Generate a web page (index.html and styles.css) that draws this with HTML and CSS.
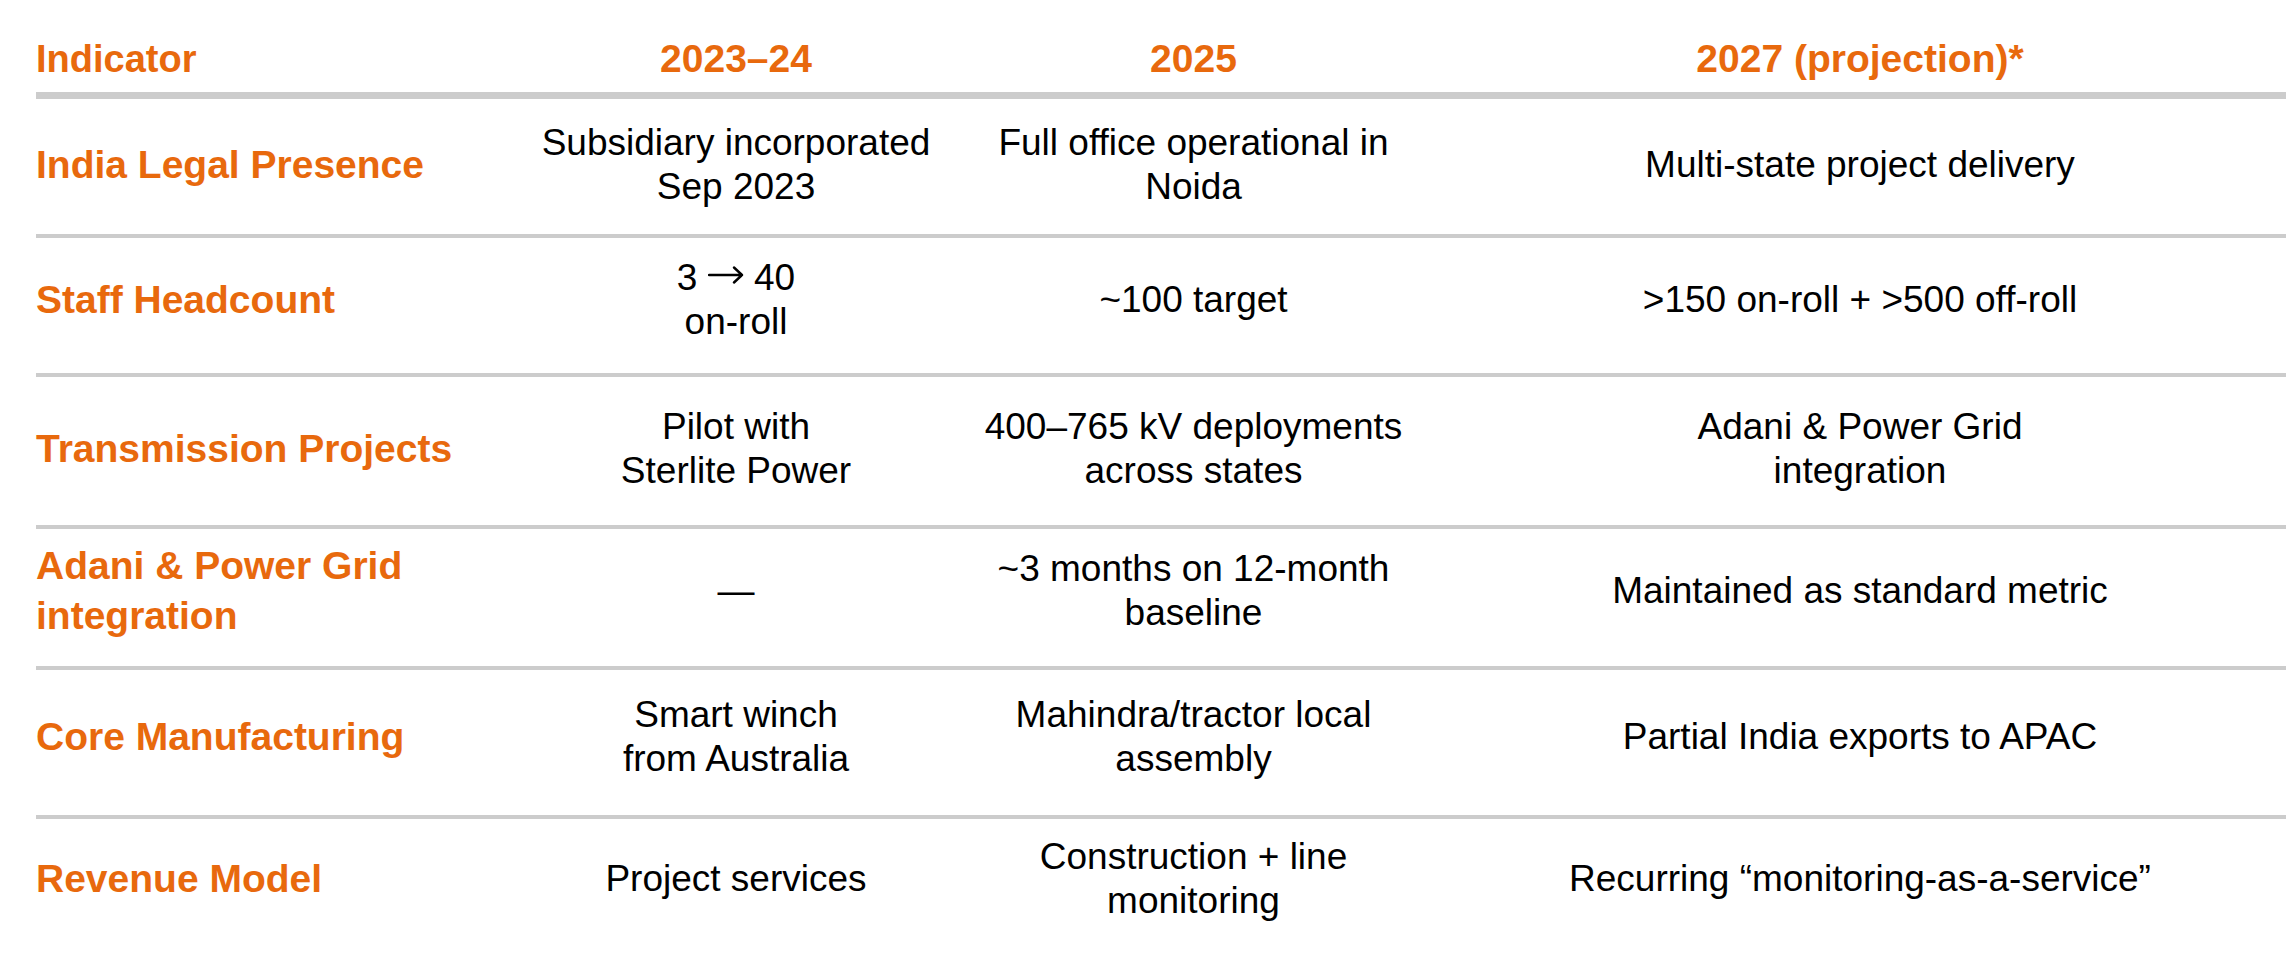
FILE: index.html
```html
<!DOCTYPE html>
<html lang="en">
<head>
<meta charset="utf-8">
<title>India roadmap indicators</title>
<link rel="stylesheet" href="styles.css">
</head>
<body>
<div class="table">
  <div class="row row-head">
    <div class="cell cell-label">Indicator</div>
    <div class="cell">2023–24</div>
    <div class="cell">2025</div>
    <div class="cell">2027 (projection)*</div>
  </div>
  <div class="row row-1">
    <div class="cell cell-label">India Legal Presence</div>
    <div class="cell">Subsidiary incorporated<br>Sep 2023</div>
    <div class="cell">Full office operational in<br>Noida</div>
    <div class="cell">Multi-state project delivery</div>
  </div>
  <div class="row row-2">
    <div class="cell cell-label">Staff Headcount</div>
    <div class="cell">3 <svg class="arrow" width="36" height="22" viewBox="0 0 36 22" aria-label="→"><path d="M1 11 H34 M26 3.5 L34 11 L26 18.5" fill="none" stroke="#000" stroke-width="2.4" stroke-linecap="round" stroke-linejoin="round"/></svg> 40<br>on-roll</div>
    <div class="cell">~100 target</div>
    <div class="cell">&gt;150 on-roll + &gt;500 off-roll</div>
  </div>
  <div class="row row-3">
    <div class="cell cell-label">Transmission Projects</div>
    <div class="cell">Pilot with<br>Sterlite Power</div>
    <div class="cell">400–765 kV deployments<br>across states</div>
    <div class="cell">Adani &amp; Power Grid<br>integration</div>
  </div>
  <div class="row row-4">
    <div class="cell cell-label">Adani &amp; Power Grid<br>integration</div>
    <div class="cell">—</div>
    <div class="cell">~3 months on 12-month<br>baseline</div>
    <div class="cell">Maintained as standard metric</div>
  </div>
  <div class="row row-5">
    <div class="cell cell-label">Core Manufacturing</div>
    <div class="cell">Smart winch<br>from Australia</div>
    <div class="cell">Mahindra/tractor local<br>assembly</div>
    <div class="cell">Partial India exports to APAC</div>
  </div>
  <div class="row row-6">
    <div class="cell cell-label">Revenue Model</div>
    <div class="cell">Project services</div>
    <div class="cell">Construction + line<br>monitoring</div>
    <div class="cell">Recurring “monitoring-as-a-service”</div>
  </div>
</div>
</body>
</html>
```

FILE: styles.css
```css
html, body {
  margin: 0;
  padding: 0;
  background: #ffffff;
}

body {
  font-family: "Liberation Sans", Arial, sans-serif;
  color: #000000;
  overflow: hidden;
}

.table {
  margin-left: 36px;
  display: flex;
  flex-direction: column;
}

.row {
  display: grid;
  grid-template-columns: 483px 434px 481px 1fr;
  align-items: center;
  box-sizing: border-box;
  border-bottom: 4px solid #cccccc;
  font-size: 37px;
  line-height: 44px;
}

.cell {
  text-align: center;
}

.cell-label {
  text-align: left;
  font-weight: bold;
  font-size: 39px;
  line-height: 50px;
  color: #e8690d;
}

.arrow {
  vertical-align: 4px;
}

.row-head {
  height: 99px;
  align-items: end;
  padding-bottom: 8px;
  border-bottom: 7px solid #cccccc;
  font-weight: bold;
  font-size: 39px;
  line-height: 50px;
  color: #e8690d;
}

.row-head .cell-label {
  font-size: 38px;
}

.row-1 { height: 139px; padding-bottom: 3px; }
.row-2 { height: 139px; padding-bottom: 12px; }
.row-3 { height: 152px; padding-bottom: 5px; }
.row-4 { height: 141px; padding-bottom: 13px; }
.row-5 { height: 149px; padding-bottom: 12px; }
.row-6 { height: 120px; border-bottom: none; }
```
